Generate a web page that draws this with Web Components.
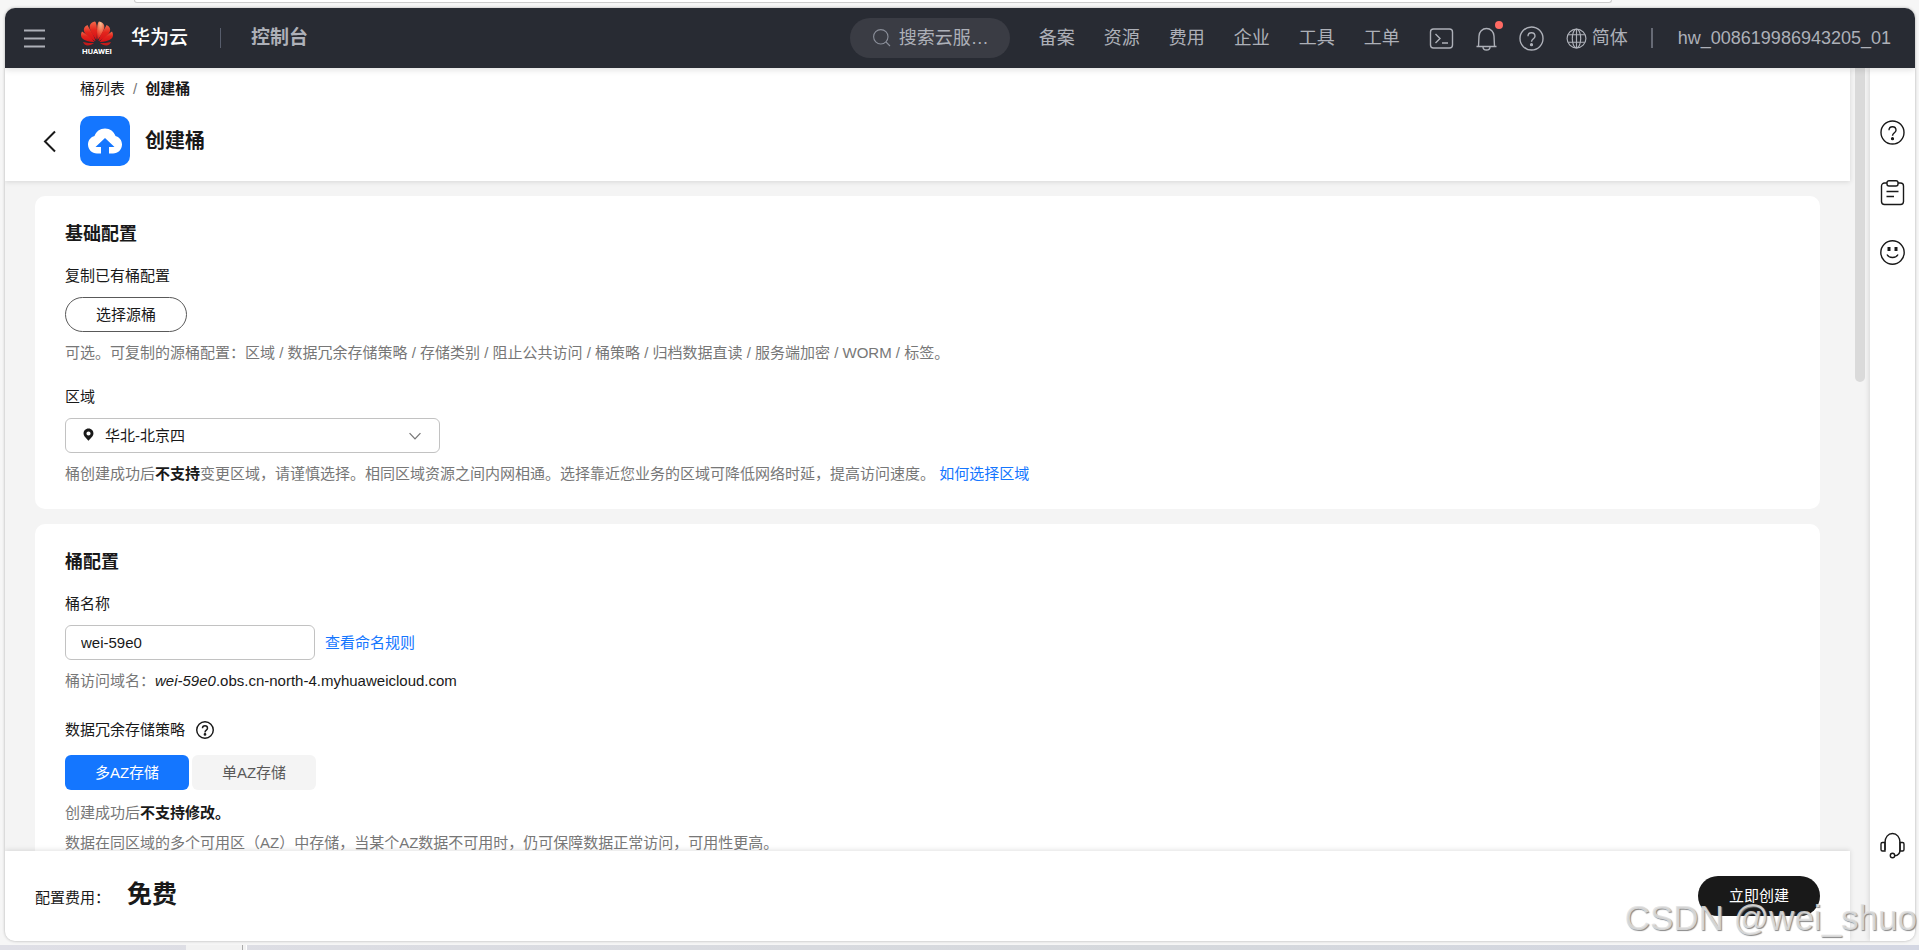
<!DOCTYPE html>
<html lang="zh-CN">
<head>
<meta charset="utf-8">
<title>创建桶</title>
<style>
  html, body { height: 100%; }
  body {
    margin: 0;
    overflow: hidden;
    background: #f6f6f6;
    color: #191919;
    font: 15px/20px "Liberation Sans", "Noto Sans CJK SC", sans-serif;
    --blue: #1476ff;
    --muted: #777;
    --line: #c2c2c2;
    --page: #f4f4f4;
  }
</style>
</head>
<body>
<browser-shell>
  <console-header slot="top" user="hw_008619986943205_01"></console-header>
  <page-title slot="title" parent="桶列表" name="创建桶"></page-title>

  <config-card heading="基础配置">
    <form-field label="复制已有桶配置">
      <pill-button>选择源桶</pill-button>
      <span slot="hint">可选。可复制的源桶配置：区域 / 数据冗余存储策略 / 存储类别 / 阻止公共访问 / 桶策略 / 归档数据直读 / 服务端加密 / WORM / 标签。</span>
    </form-field>
    <region-field label="区域" value="华北-北京四"></region-field>
  </config-card>

  <config-card heading="桶配置">
    <bucket-name-field label="桶名称" value="wei-59e0"></bucket-name-field>
    <az-policy-field label="数据冗余存储策略"></az-policy-field>
  </config-card>

  <price-footer slot="footer" label="配置费用：" price="免费"></price-footer>
  <side-tools slot="side"></side-tools>
</browser-shell>

<script>
const ICONS = {
  menu: '<path d="M2 4.500h21M2 12.500h21M2 20.500h21" stroke-width="2"/>',
  search: '<circle cx="11" cy="11" r="9"/><path d="M17.500 17.500l5 5"/>',
  terminal: '<rect x="1.500" y="3" width="22" height="19" rx="3"/><path d="M6.500 8l4.500 4.500-4.500 4.500M13 17h6"/>',
  bell: '<path d="M2.500 20.500h20M4.500 20.500L5 10a7.500 7.500 0 0 1 15 0l.5 10.500M9 21c0 4 7 4 7 0"/>',
  help: '<circle cx="12.500" cy="12.500" r="11.500"/><path d="M9 10.200c0-4.700 7-4.700 7 0 0 2.500-3.500 2.600-3.500 5.600"/><circle cx="12.500" cy="18.700" r=".9" fill="currentColor"/>',
  globe: '<circle cx="12.500" cy="12.500" r="11.200"/><ellipse cx="12.500" cy="12.500" rx="5" ry="11.200"/><path d="M12.500 1.300v22.400M2.500 8h20M2.500 17h20"/>',
  back: '<path d="M17 2.500L7 12.500l10 10" stroke-width="2"/>',
  down: '<path d="M4 8l8.500 9L21 8" stroke-width="2"/>',
  pin: '<path d="M12.500 1C6.500 1 3 5.500 3 10.500 3 16 9 20 12.500 24.500 16 20 22 16 22 10.500 22 5.500 18.500 1 12.500 1zM12.500 6.500a4 4 0 1 1 0 8 4 4 0 0 1 0-8z" fill="currentColor" fill-rule="evenodd" stroke="none"/>',
  note: '<path d="M7 3H4.500A3 3 0 0 0 1.500 6v15.500a3 3 0 0 0 3 3h16a3 3 0 0 0 3-3V6a3 3 0 0 0-3-3H18"/><rect x="7" y=".7" width="11" height="5.300" rx="2"/><path d="M6.500 11.500h12M6.500 16.500h7.500"/>',
  smile: '<circle cx="12.500" cy="12.500" r="11.700"/><path d="M7 14.500c2 4 9 4 11 0"/><path d="M9 7v4M16 7v4" stroke-width="3"/>',
  headset: '<path d="M5 17V9.500C5 4.500 8 .5 12.500 .5S20 4.500 20 9.500V17c0 4-2 5.500-5.500 5.800"/><path d="M5 9.500H2.500A1.500 1.500 0 0 0 1 11v5.500A1.500 1.500 0 0 0 2.500 18H5zM20 9.500h2.500A1.500 1.500 0 0 1 24 11v5.500a1.500 1.500 0 0 1-1.500 1.500H20z"/><circle cx="12.500" cy="22.500" r="2.200"/>'
};

function icon(name, size, width = 1.4) {
  return `<svg width="${size}" height="${size}" viewBox="0 0 25 25" fill="none" stroke="currentColor" stroke-width="${width}" overflow="visible" aria-hidden="true">${ICONS[name]}</svg>`;
}

// Rules that every shadow root starts with
const BASE = `
  *, *::before, *::after { box-sizing: border-box; }
  a { color: inherit; text-decoration: none; }
  button, input, select { font: inherit; color: inherit; margin: 0; }
  button { padding: 0; border: 0; background: none; cursor: pointer; }
  svg { display: block; flex: none; }
`;

class BaseElement extends HTMLElement {
  constructor() {
    super();
    this.attachShadow({ mode: 'open' });
  }

  connectedCallback() {
    this.shadowRoot.innerHTML = `<style>${BASE}</style>${this.render()}`;
  }

  attr(name) {
    return this.getAttribute(name) || '';
  }
}

class BrowserShell extends BaseElement {
  render() {
    return `
      <style>
        :host { display: grid; grid-template-rows: 8px minmax(0, 1fr) 4px 5px; height: 100vh; position: relative; overflow: hidden; }
        .address { width: 77%; margin-left: 7%; height: 3px; background: #fff; border: 1px solid #ccc; border-top: 0; border-radius: 0 0 12px 12px; }
        .window {
          display: grid; grid-template-rows: 60px minmax(0, 1fr); margin: 0 4px 0 5px;
          border-radius: 10px; overflow: hidden; background: var(--page); box-shadow: 0 0 3px #aaa;
        }
        .body { display: grid; grid-template-columns: minmax(0, 1fr) 20px 45px; min-height: 0; }
        main { display: grid; grid-template-rows: 113px minmax(0, 1fr) 90px; min-height: 0; }
        .scroll { overflow: hidden; padding: 15px 30px 0; display: flex; flex-direction: column; gap: 15px; }
        .track { padding: 0 5px; }
        .thumb { height: 36%; background: #dadada; border-radius: 0 0 5px 5px; }
        .taskbar { grid-row: 4; display: flex; background: linear-gradient(90deg, #dfdfe6, #d5d8dc 60%, #d4d7e3); }
        .tab { width: 61px; margin-left: 186px; background: #f2f2f2; border-right: 1px solid #fff; }
        .tab::before { content: ""; display: block; width: 1px; height: 5px; margin-left: 56px; background: #aaa; }
        .mark {
          position: absolute; right: 2px; bottom: 12px; z-index: 5; font-size: 35px; line-height: 40px; white-space: nowrap;
          color: rgba(225, 225, 225, .85); text-shadow: 1px 1px 1px #888; pointer-events: none;
        }
      </style>
      <div><div class="address"></div></div>
      <div class="window">
        <slot name="top"></slot>
        <div class="body">
          <main>
            <slot name="title"></slot>
            <div class="scroll"><slot></slot></div>
            <slot name="footer"></slot>
          </main>
          <div class="track"><div class="thumb"></div></div>
          <slot name="side"></slot>
        </div>
      </div>
      <div class="taskbar"><div class="tab"></div></div>
      <div class="mark">CSDN @wei_shuo</div>`;
  }
}

class HuaweiLogo extends BaseElement {
  render() {
    return `
      <style>
        :host { display: flex; flex-direction: column; align-items: center; width: 32px; }
        span { color: #fff; font: bold 8px/8px Roboto, sans-serif; margin-top: 2px; }
      </style>
      <svg width="32" height="25" viewBox="0 0 64 50" role="img" aria-label="HUAWEI">
        <defs>
          <linearGradient id="g" x1="0" y1="0" x2="0" y2="1">
            <stop offset="0" stop-color="#f36a4c"/><stop offset=".45" stop-color="#e3261d"/><stop offset="1" stop-color="#d80f16"/>
          </linearGradient>
          <radialGradient id="h" cx=".5" cy=".1" r=".9">
            <stop offset="0" stop-color="#fbc093"/><stop offset=".6" stop-color="#ee5a40"/><stop offset="1" stop-color="#df1c18"/>
          </radialGradient>
        </defs>
        <path fill="url(#g)" d="M30 37C18 20 15 12 19 6c2-3 6-5 9-5 4 3 5 19 3 36z"/>
        <path fill="url(#h)" d="M34 37C46 20 49 12 45 6c-2-3-6-5-9-5-4 3-5 19-3 36z"/>
        <path fill="url(#g)" d="M28 40C10 30 4 22 6 15c1-3 3-5 7-7 4 9 13 19 16 32zM36 40c18-10 24-18 22-25-1-3-3-5-7-7-4 9-13 19-16 32z"/>
        <path fill="url(#g)" d="M26 42C8 41 0 36 0 28c0-3 1-5 2-7 8 5 19 13 25 21zM38 42c18-1 26-6 26-14 0-3-1-5-2-7-8 5-19 13-25 21z"/>
        <path fill="#c21b1b" d="M26 44c-4 3-9 6-14 5-4-1-7-4-8-7 8 2 14 2 22 2zM38 44c4 3 9 6 14 5 4-1 7-4 8-7-8 2-14 2-22 2z"/>
      </svg>
      <span>HUAWEI</span>`;
  }
}

class ConsoleHeader extends BaseElement {
  render() {
    const links = ['备案', '资源', '费用', '企业', '工具', '工单'];
    return `
      <style>
        :host { display: flex; align-items: center; padding: 0 24px 0 17px; background: #282b33; color: #adb0b8; font-size: 18px; z-index: 2; box-shadow: 0 2px 6px rgba(0, 0, 0, .12); }
        .brand { color: #fff; font-size: 19px; font-weight: 500; margin-left: 18px; }
        huawei-logo { margin-left: 34px; }
        .sep { width: 1px; height: 20px; background: #575d6c; }
        .brand + .sep { margin: 0 30px 0 32px; }
        .console { font-size: 19px; font-weight: bold; }
        .search { display: flex; align-items: center; gap: 7px; width: 160px; height: 40px; margin-left: auto; padding: 0 20px 0 22px; border-radius: 20px; background: #3a3c44; }
        .search svg { color: #8a8e99; }
        input { width: 100%; min-width: 0; border: 0; padding: 0; background: none; outline: 0; text-overflow: ellipsis; }
        input::placeholder { color: #adb0b8; opacity: 1; }
        nav { display: flex; gap: 29px; margin: 0 29px; }
        .tools { display: flex; align-items: center; gap: 20px; }
        .bell { position: relative; }
        .bell::after { content: ""; position: absolute; right: -4px; top: -5px; width: 8px; height: 8px; border-radius: 50%; background: #ff6a63; }
        .lang { display: flex; align-items: center; gap: 5px; margin-left: 2px; }
        .tools + .sep { margin: 0 25px 0 23px; background: #666a75; width: 2px; }
      </style>
      <button aria-label="菜单">${icon('menu', 25)}</button>
      <huawei-logo></huawei-logo>
      <a class="brand" href="#">华为云</a>
      <div class="sep"></div>
      <a class="console" href="#">控制台</a>
      <label class="search">${icon('search', 20)}<input type="text" placeholder="搜索云服务、文档" aria-label="搜索"></label>
      <nav>${links.map(text => `<a href="#">${text}</a>`).join('')}</nav>
      <div class="tools">
        <button aria-label="终端">${icon('terminal', 25)}</button>
        <button class="bell" aria-label="消息">${icon('bell', 25)}</button>
        <button aria-label="帮助">${icon('help', 25)}</button>
        <button class="lang">${icon('globe', 21)}简体</button>
      </div>
      <div class="sep"></div>
      <a href="#">${this.attr('user')}</a>`;
  }
}

class PageTitle extends BaseElement {
  render() {
    return `
      <style>
        :host { display: block; padding: 11px 30px 0 75px; background: #fff; z-index: 1; box-shadow: 0 1px 5px rgba(0, 0, 0, .12); }
        nav { display: flex; gap: 8px; }
        nav span { color: var(--muted); }
        .row { display: flex; align-items: center; margin: 17px 0 0 -42px; }
        .logo { display: grid; place-items: center; width: 50px; height: 50px; margin: 0 15px 0 17px; border-radius: 10px; background: var(--blue); }
        h1 { margin: 0; font-size: 20px; line-height: 28px; }
      </style>
      <nav aria-label="位置"><a href="#">${this.attr('parent')}</a><span>/</span><b>${this.attr('name')}</b></nav>
      <div class="row">
        <button aria-label="返回">${icon('back', 25)}</button>
        <div class="logo">
          <svg width="34" height="26" viewBox="0 0 34 26"><path fill="#fff" d="M13 25.500H9C4 25.500 0 21.500 0 16.500c0-4.500 3-7.500 6.500-8.500C8 3.500 12 .5 17 .5S26 3.500 27.500 8c3.500 1 6.500 4 6.500 8.500 0 5-4 9-9 9h-4V19h5.500L17 10 7.500 19H13z"/></svg>
        </div>
        <h1>${this.attr('name')}</h1>
      </div>`;
  }
}

class ConfigCard extends BaseElement {
  render() {
    return `
      <style>
        :host { display: flex; flex-direction: column; gap: 24px; flex: none; padding: 26px 30px 25px; border-radius: 10px; background: #fff; }
        h2 { margin: 0 0 -4px; font-size: 18px; line-height: 24px; }
      </style>
      <h2>${this.attr('heading')}</h2>
      <slot></slot>`;
  }
}

// Shared box of a labelled field: label, control row, hint lines
const FIELD = `
  :host { display: block; }
  .label { display: flex; align-items: center; gap: 11px; min-height: 20px; }
  .control { display: flex; align-items: center; gap: 10px; margin: 11px 0; }
  .hint { color: var(--muted); }
  .link { color: var(--blue); }
  b, .dark { color: #191919; }
`;

class FormField extends BaseElement {
  render() {
    return `
      <style>${FIELD}</style>
      <div class="label">${this.attr('label')}</div>
      <div class="control"><slot></slot></div>
      <div class="hint"><slot name="hint"></slot></div>`;
  }
}

class PillButton extends BaseElement {
  render() {
    return `
      <style>
        :host { display: block; }
        button { display: block; height: 35px; padding: 0 30px; border: 1px solid #595959; border-radius: 18px; }
        :host([primary]) button { height: 40px; padding: 0 31px; border: 0; border-radius: 20px; background: #191919; color: #fff; }
      </style>
      <button><slot></slot></button>`;
  }
}

class RegionField extends BaseElement {
  render() {
    return `
      <style>
        ${FIELD}
        .select { position: relative; width: 375px; }
        select { display: block; width: 100%; height: 35px; padding: 0 39px; border: 1px solid var(--line); border-radius: 6px; background: #fff; appearance: none; }
        svg { position: absolute; top: 10px; pointer-events: none; }
        .pin svg { left: 17px; }
        .down svg { right: 17px; color: var(--muted); }
      </style>
      <label class="label" for="region">${this.attr('label')}</label>
      <div class="control">
        <div class="select">
          <select id="region"><option>${this.attr('value')}</option></select>
          <span class="pin">${icon('pin', 13)}</span>
          <span class="down">${icon('down', 16, 2)}</span>
        </div>
      </div>
      <div class="hint">桶创建成功后<b>不支持</b>变更区域，请谨慎选择。相同区域资源之间内网相通。选择靠近您业务的区域可降低网络时延，提高访问速度。 <a class="link" href="#">如何选择区域</a></div>`;
  }
}

class BucketNameField extends BaseElement {
  render() {
    return `
      <style>
        ${FIELD}
        input { width: 250px; height: 35px; padding: 0 15px; border: 1px solid var(--line); border-radius: 6px; }
      </style>
      <label class="label" for="name">${this.attr('label')}</label>
      <div class="control"><input id="name" type="text" value="${this.attr('value')}"><a class="link" href="#">查看命名规则</a></div>
      <div class="hint">桶访问域名：<span class="dark"><i>${this.attr('value')}</i>.obs.cn-north-4.myhuaweicloud.com</span></div>`;
  }
}

class AzPolicyField extends BaseElement {
  render() {
    return `
      <style>
        ${FIELD}
        :host { margin-top: 5px; }
        .control { gap: 3px; margin: 15px 0 13px; }
        .control button { width: 124px; height: 35px; border-radius: 6px; background: var(--page); color: #595959; }
        .control .on { background: var(--blue); color: #fff; }
        .hint { margin-bottom: 10px; }
      </style>
      <div class="label">${this.attr('label')}<button aria-label="说明">${icon('help', 18, 2)}</button></div>
      <div class="control">
        <button class="on" aria-pressed="true">多AZ存储</button>
        <button aria-pressed="false">单AZ存储</button>
      </div>
      <div class="hint">创建成功后<b>不支持修改。</b></div>
      <div class="hint">数据在同区域的多个可用区（AZ）中存储，当某个AZ数据不可用时，仍可保障数据正常访问，可用性更高。</div>`;
  }
}

class PriceFooter extends BaseElement {
  render() {
    return `
      <style>
        :host { display: flex; align-items: center; justify-content: space-between; padding: 0 30px; background: #fff; z-index: 1; box-shadow: 0 -1px 5px rgba(0, 0, 0, .12); }
        .price { display: flex; align-items: baseline; gap: 17px; padding-bottom: 5px; }
        strong { font-size: 25px; line-height: 32px; }
      </style>
      <div class="price"><span>${this.attr('label')}</span><strong>${this.attr('price')}</strong></div>
      <pill-button primary>立即创建</pill-button>`;
  }
}

class SideTools extends BaseElement {
  render() {
    return `
      <style>
        :host { display: flex; flex-direction: column; align-items: center; gap: 35px; padding: 52px 0 83px; background: #fff; box-shadow: -1px 0 5px rgba(0, 0, 0, .12); }
        .service { margin-top: auto; }
      </style>
      <button aria-label="帮助">${icon('help', 25)}</button>
      <button aria-label="文档">${icon('note', 25)}</button>
      <button aria-label="反馈">${icon('smile', 25)}</button>
      <button class="service" aria-label="客服">${icon('headset', 25)}</button>`;
  }
}

customElements.define('huawei-logo', HuaweiLogo);
customElements.define('console-header', ConsoleHeader);
customElements.define('page-title', PageTitle);
customElements.define('pill-button', PillButton);
customElements.define('form-field', FormField);
customElements.define('region-field', RegionField);
customElements.define('bucket-name-field', BucketNameField);
customElements.define('az-policy-field', AzPolicyField);
customElements.define('config-card', ConfigCard);
customElements.define('price-footer', PriceFooter);
customElements.define('side-tools', SideTools);
customElements.define('browser-shell', BrowserShell);
</script>
</body>
</html>
